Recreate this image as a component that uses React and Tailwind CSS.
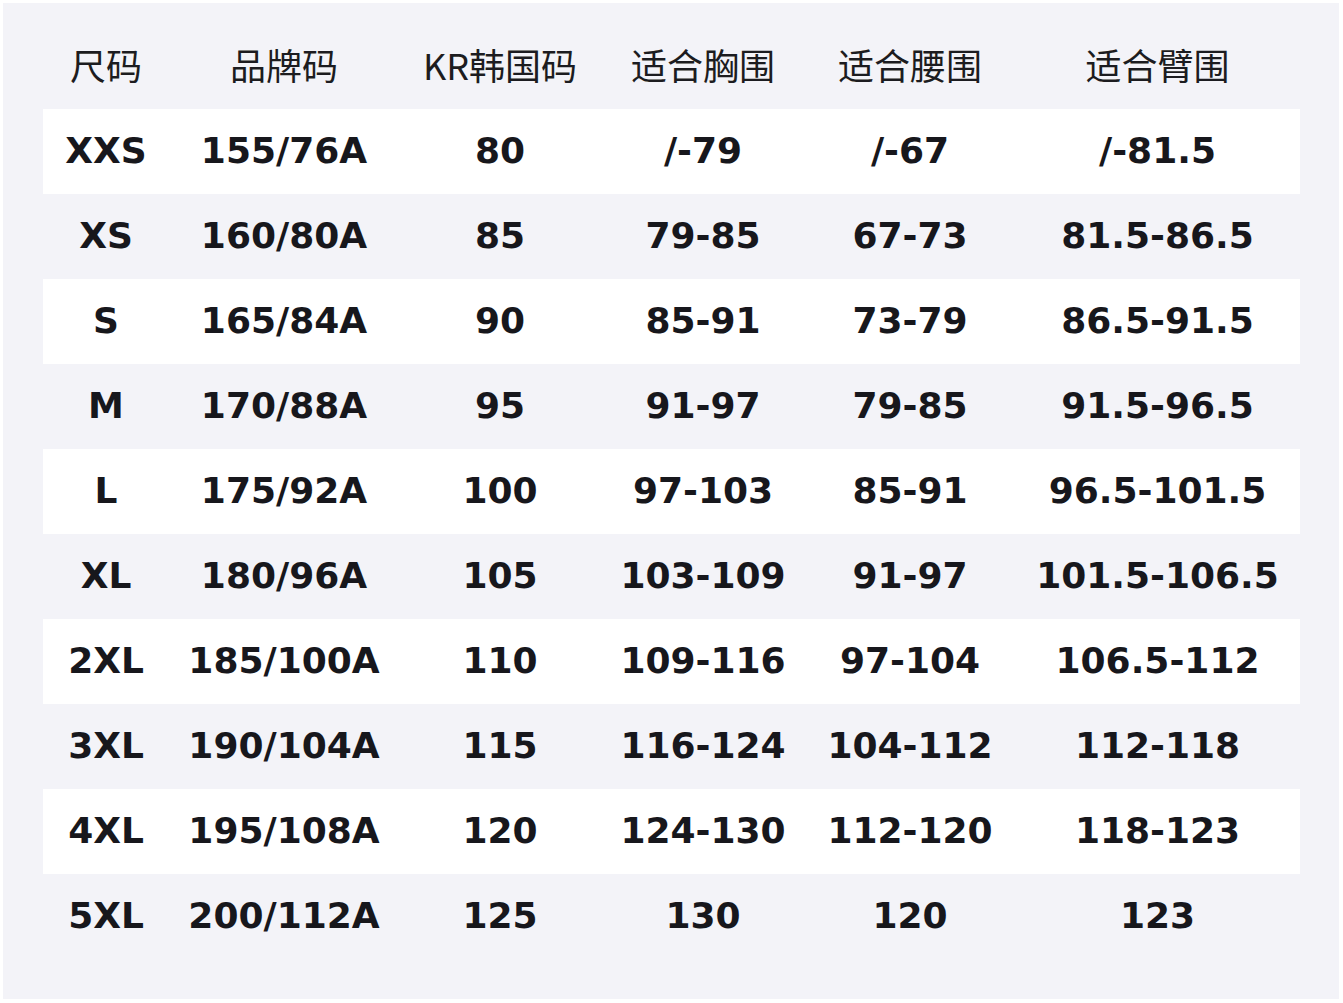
const headers = ["尺码", "品牌码", "KR韩国码", "适合胸围", "适合腰围", "适合臂围"];

const rows = [
  ["XXS", "155/76A", "80", "/-79", "/-67", "/-81.5"],
  ["XS", "160/80A", "85", "79-85", "67-73", "81.5-86.5"],
  ["S", "165/84A", "90", "85-91", "73-79", "86.5-91.5"],
  ["M", "170/88A", "95", "91-97", "79-85", "91.5-96.5"],
  ["L", "175/92A", "100", "97-103", "85-91", "96.5-101.5"],
  ["XL", "180/96A", "105", "103-109", "91-97", "101.5-106.5"],
  ["2XL", "185/100A", "110", "109-116", "97-104", "106.5-112"],
  ["3XL", "190/104A", "115", "116-124", "104-112", "112-118"],
  ["4XL", "195/108A", "120", "124-130", "112-120", "118-123"],
  ["5XL", "200/112A", "125", "130", "120", "123"],
];

const cols = "grid grid-cols-[126px_230px_202px_204px_210px_285px]";

export default function App() {
  return (
    <div className="w-[1343px] h-[1003px] bg-white pt-[3px] pl-[3px] pr-[4px] pb-[4px]">
      <div className="h-full bg-[#f3f3f8] pl-[40px] pt-[21px]">
        {/* header */}
        <div
          className={`${cols} h-[85px] pb-[6px] items-center text-[36px] text-[#1c1c20]`}
          style={{ fontFamily: '"Noto Sans CJK SC", "Noto Sans", sans-serif' }}
        >
          {headers.map((h, i) => (
            <div key={i} className="text-center leading-none">
              {h}
            </div>
          ))}
        </div>

        {/* body */}
        <div style={{ fontFamily: '"DejaVu Sans", sans-serif' }}>
          {rows.map((r, i) => (
            <div
              key={i}
              className={`${cols} h-[85px] pb-[1px] items-center text-[36px] font-bold text-[#17171c] ${
                i % 2 === 0 ? "bg-white w-[1257px]" : ""
              }`}
            >
              {r.map((c, j) => (
                <div key={j} className="text-center leading-none whitespace-nowrap">
                  {c}
                </div>
              ))}
            </div>
          ))}
        </div>
      </div>
    </div>
  );
}
